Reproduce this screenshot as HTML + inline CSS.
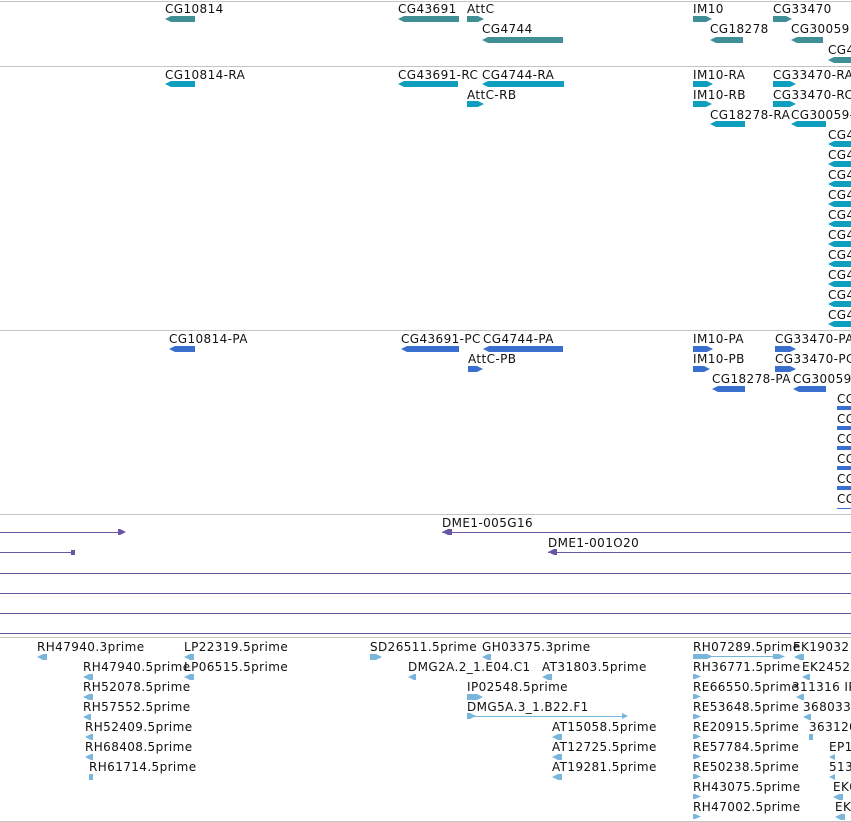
<!DOCTYPE html>
<html><head><meta charset="utf-8"><style>
body{margin:0;width:851px;height:822px;background:#fff;position:relative;overflow:hidden;font-family:"DejaVu Sans","Liberation Sans",sans-serif;font-size:12px;color:#111}
.t{position:absolute;white-space:nowrap;line-height:14px;letter-spacing:0.4px}
.b{position:absolute;height:6px}
.L{clip-path:polygon(0 50%,6px 0,100% 0,100% 100%,6px 100%)}
.R{clip-path:polygon(0 0,calc(100% - 6px) 0,100% 50%,calc(100% - 6px) 100%,0 100%)}
.g{background:#3f8f94}.c{background:#0e9fbf}.p{background:#3a6fcf}.e{background:#7ab5dc}
.h{position:absolute;height:1px;left:0;width:851px}
.gray{background:#c4c4c4}.pur{background:#6a55a3}
.pl{position:absolute;height:1px;background:#6a55a3}
.ln{position:absolute;height:1px}
</style></head><body>
<div class="h gray" style="top:1px"></div>
<div class="h gray" style="top:66px"></div>
<div class="h gray" style="top:330px"></div>
<div class="h gray" style="top:514px"></div>
<div class="h pur" style="top:573px"></div>
<div class="h pur" style="top:593px"></div>
<div class="h pur" style="top:613px"></div>
<div class="h pur" style="top:633px"></div>
<div class="h gray" style="top:637px"></div>
<div class="h gray" style="top:821px"></div>

<div class="t" style="left:165px;top:2px">CG10814</div><div class="b g L" style="left:165px;top:16px;width:30px"></div>
<div class="t" style="left:398px;top:2px">CG43691</div><div class="b g L" style="left:398px;top:16px;width:61px"></div>
<div class="t" style="left:467px;top:2px">AttC</div><div class="b g R" style="left:467px;top:16px;width:17px"></div>
<div class="t" style="left:693px;top:2px">IM10</div><div class="b g R" style="left:693px;top:16px;width:19px"></div>
<div class="t" style="left:773px;top:2px">CG33470</div><div class="b g R" style="left:773px;top:16px;width:19px"></div>
<div class="t" style="left:482px;top:22px">CG4744</div><div class="b g L" style="left:482px;top:37px;width:81px"></div>
<div class="t" style="left:710px;top:22px">CG18278</div><div class="b g L" style="left:710px;top:37px;width:33px"></div>
<div class="t" style="left:791px;top:22px">CG30059</div><div class="b g L" style="left:791px;top:37px;width:32px"></div>
<div class="t" style="left:828px;top:43px">CG4744</div><div class="b g L" style="left:828px;top:57px;width:23px"></div>

<div class="t" style="left:165px;top:68px">CG10814-RA</div><div class="b c L" style="left:165px;top:81px;width:30px"></div>
<div class="t" style="left:398px;top:68px">CG43691-RC</div><div class="b c L" style="left:398px;top:81px;width:60px"></div>
<div class="t" style="left:482px;top:68px">CG4744-RA</div><div class="b c L" style="left:482px;top:81px;width:82px"></div>
<div class="t" style="left:693px;top:68px">IM10-RA</div><div class="b c R" style="left:693px;top:81px;width:20px"></div>
<div class="t" style="left:773px;top:68px">CG33470-RA</div><div class="b c R" style="left:773px;top:81px;width:23px"></div>
<div class="t" style="left:467px;top:88px">AttC-RB</div><div class="b c R" style="left:467px;top:101px;width:17px"></div>
<div class="t" style="left:693px;top:88px">IM10-RB</div><div class="b c R" style="left:693px;top:101px;width:19px"></div>
<div class="t" style="left:773px;top:88px">CG33470-RC</div><div class="b c R" style="left:773px;top:101px;width:23px"></div>
<div class="t" style="left:710px;top:108px">CG18278-RA</div><div class="b c L" style="left:710px;top:121px;width:35px"></div>
<div class="t" style="left:791px;top:108px">CG30059-RA</div><div class="b c L" style="left:791px;top:121px;width:35px"></div>
<div class="t" style="left:828px;top:128px">CG4744</div><div class="b c L" style="left:828px;top:141px;width:23px"></div>
<div class="t" style="left:828px;top:148px">CG4744</div><div class="b c L" style="left:828px;top:161px;width:23px"></div>
<div class="t" style="left:828px;top:168px">CG4744</div><div class="b c L" style="left:828px;top:181px;width:23px"></div>
<div class="t" style="left:828px;top:188px">CG4744</div><div class="b c L" style="left:828px;top:201px;width:23px"></div>
<div class="t" style="left:828px;top:208px">CG4744</div><div class="b c L" style="left:828px;top:221px;width:23px"></div>
<div class="t" style="left:828px;top:228px">CG4744</div><div class="b c L" style="left:828px;top:241px;width:23px"></div>
<div class="t" style="left:828px;top:248px">CG4744</div><div class="b c L" style="left:828px;top:261px;width:23px"></div>
<div class="t" style="left:828px;top:268px">CG4744</div><div class="b c L" style="left:828px;top:281px;width:23px"></div>
<div class="t" style="left:828px;top:288px">CG4744</div><div class="b c L" style="left:828px;top:301px;width:23px"></div>
<div class="t" style="left:828px;top:308px">CG4744</div><div class="b c L" style="left:828px;top:321px;width:23px"></div>

<div class="t" style="left:169px;top:332px">CG10814-PA</div><div class="b p L" style="left:169px;top:346px;width:26px"></div>
<div class="t" style="left:401px;top:332px">CG43691-PC</div><div class="b p L" style="left:401px;top:346px;width:58px"></div>
<div class="t" style="left:483px;top:332px">CG4744-PA</div><div class="b p L" style="left:483px;top:346px;width:80px"></div>
<div class="t" style="left:693px;top:332px">IM10-PA</div><div class="b p R" style="left:693px;top:346px;width:20px"></div>
<div class="t" style="left:775px;top:332px">CG33470-PA</div><div class="b p R" style="left:775px;top:346px;width:21px"></div>
<div class="t" style="left:468px;top:352px">AttC-PB</div><div class="b p R" style="left:468px;top:366px;width:15px"></div>
<div class="t" style="left:693px;top:352px">IM10-PB</div><div class="b p R" style="left:693px;top:366px;width:17px"></div>
<div class="t" style="left:775px;top:352px">CG33470-PC</div><div class="b p R" style="left:775px;top:366px;width:21px"></div>
<div class="t" style="left:712px;top:372px">CG18278-PA</div><div class="b p L" style="left:712px;top:386px;width:33px"></div>
<div class="t" style="left:793px;top:372px">CG30059</div><div class="b p L" style="left:793px;top:386px;width:33px"></div>
<div class="t" style="left:837px;top:392px">CG</div><div class="b p" style="left:837px;top:406px;width:14px;height:4px"></div>
<div class="t" style="left:837px;top:412px">CG</div><div class="b p" style="left:837px;top:426px;width:14px;height:4px"></div>
<div class="t" style="left:837px;top:432px">CG</div><div class="b p" style="left:837px;top:446px;width:14px;height:4px"></div>
<div class="t" style="left:837px;top:452px">CG</div><div class="b p" style="left:837px;top:466px;width:14px;height:4px"></div>
<div class="t" style="left:837px;top:472px">CG</div><div class="b p" style="left:837px;top:486px;width:14px;height:4px"></div>
<div class="t" style="left:837px;top:492px">CG</div><div class="b p" style="left:837px;top:508px;width:14px;height:1px"></div>

<div class="pl" style="left:0;top:532px;width:122px"></div><div class="b R" style="left:118px;top:529px;width:8px;background:#6a55a3"></div>
<div class="t" style="left:442px;top:516px">DME1-005G16</div>
<div class="pl" style="left:442px;top:532px;width:409px"></div><div class="b L" style="left:442px;top:529px;width:10px;background:#6a55a3"></div>
<div class="pl" style="left:0;top:552px;width:75px"></div><div class="b" style="left:71px;top:550px;width:4px;height:5px;background:#6a55a3"></div>
<div class="t" style="left:548px;top:536px">DME1-001O20</div>
<div class="pl" style="left:548px;top:552px;width:303px"></div><div class="b L" style="left:548px;top:549px;width:9px;background:#6a55a3"></div>

<div class="t" style="left:37px;top:640px">RH47940.3prime</div><div class="b e L" style="left:37px;top:654px;width:10px"></div>
<div class="t" style="left:184px;top:640px">LP22319.5prime</div><div class="b e L" style="left:184px;top:654px;width:10px"></div>
<div class="t" style="left:370px;top:640px">SD26511.5prime</div><div class="b e R" style="left:370px;top:654px;width:12px"></div>
<div class="t" style="left:482px;top:640px">GH03375.3prime</div><div class="b e L" style="left:482px;top:654px;width:9px"></div>
<div class="t" style="left:83px;top:660px">RH47940.5prime</div><div class="b e L" style="left:83px;top:674px;width:10px"></div>
<div class="t" style="left:184px;top:660px">LP06515.5prime</div><div class="b e L" style="left:184px;top:674px;width:10px"></div>
<div class="t" style="left:408px;top:660px">DMG2A.2_1.E04.C1</div><div class="b e L" style="left:408px;top:674px;width:8px"></div>
<div class="t" style="left:542px;top:660px">AT31803.5prime</div><div class="b e L" style="left:542px;top:674px;width:10px"></div>
<div class="t" style="left:83px;top:680px">RH52078.5prime</div><div class="b e L" style="left:83px;top:694px;width:10px"></div>
<div class="t" style="left:467px;top:680px">IP02548.5prime</div><div class="b e R" style="left:467px;top:694px;width:16px"></div>
<div class="t" style="left:83px;top:700px">RH57552.5prime</div><div class="b e L" style="left:83px;top:714px;width:8px"></div>
<div class="t" style="left:467px;top:700px">DMG5A.3_1.B22.F1</div><div class="ln" style="left:467px;top:716px;width:160px;background:#7ab5dc"></div><div class="b e R" style="left:467px;top:713px;width:9px"></div><div class="b e R" style="left:622px;top:713px;width:6px"></div>
<div class="t" style="left:85px;top:720px">RH52409.5prime</div><div class="b e L" style="left:85px;top:734px;width:8px"></div>
<div class="t" style="left:552px;top:720px">AT15058.5prime</div><div class="b e L" style="left:552px;top:734px;width:10px"></div>
<div class="t" style="left:85px;top:740px">RH68408.5prime</div><div class="b e L" style="left:85px;top:754px;width:8px"></div>
<div class="t" style="left:552px;top:740px">AT12725.5prime</div><div class="b e L" style="left:552px;top:754px;width:10px"></div>
<div class="t" style="left:89px;top:760px">RH61714.5prime</div><div class="b e" style="left:89px;top:774px;width:4px"></div>
<div class="t" style="left:552px;top:760px">AT19281.5prime</div><div class="b e L" style="left:552px;top:774px;width:10px"></div>

<div class="t" style="left:693px;top:640px">RH07289.5prime</div><div class="ln" style="left:693px;top:656px;width:90px;background:#7ab5dc"></div><div class="b e R" style="left:693px;top:654px;width:20px;height:5px"></div><div class="b e R" style="left:773px;top:654px;width:12px;height:5px"></div>
<div class="t" style="left:793px;top:640px">EK19032</div><div class="b e L" style="left:794px;top:654px;width:10px"></div>
<div class="t" style="left:693px;top:660px">RH36771.5prime</div><div class="b e R" style="left:693px;top:674px;width:8px;height:5px"></div>
<div class="t" style="left:802px;top:660px">EK24520</div><div class="b e L" style="left:802px;top:674px;width:8px"></div>
<div class="t" style="left:693px;top:680px">RE66550.5prime</div><div class="b e R" style="left:693px;top:694px;width:8px;height:5px"></div>
<div class="t" style="left:792px;top:680px">311316 IP</div><div class="b e L" style="left:796px;top:694px;width:8px"></div>
<div class="t" style="left:693px;top:700px">RE53648.5prime</div><div class="b e R" style="left:693px;top:714px;width:8px;height:5px"></div>
<div class="t" style="left:803px;top:700px">368033</div><div class="b e L" style="left:803px;top:714px;width:8px"></div>
<div class="t" style="left:693px;top:720px">RE20915.5prime</div><div class="b e R" style="left:693px;top:734px;width:8px;height:5px"></div>
<div class="t" style="left:809px;top:720px">363120</div><div class="b e" style="left:809px;top:734px;width:4px"></div>
<div class="t" style="left:693px;top:740px">RE57784.5prime</div><div class="b e R" style="left:693px;top:754px;width:8px;height:5px"></div>
<div class="t" style="left:829px;top:740px">EP1</div><div class="b e L" style="left:829px;top:754px;width:6px"></div>
<div class="t" style="left:693px;top:760px">RE50238.5prime</div><div class="b e R" style="left:693px;top:774px;width:8px;height:5px"></div>
<div class="t" style="left:829px;top:760px">513</div><div class="b e L" style="left:829px;top:774px;width:6px"></div>
<div class="t" style="left:693px;top:780px">RH43075.5prime</div><div class="b e R" style="left:693px;top:794px;width:8px;height:5px"></div>
<div class="t" style="left:833px;top:780px">EK0</div><div class="b e L" style="left:833px;top:794px;width:10px"></div>
<div class="t" style="left:693px;top:800px">RH47002.5prime</div><div class="b e R" style="left:693px;top:814px;width:8px;height:5px"></div>
<div class="t" style="left:835px;top:800px">EK</div><div class="b e L" style="left:835px;top:814px;width:10px"></div>
</body></html>
